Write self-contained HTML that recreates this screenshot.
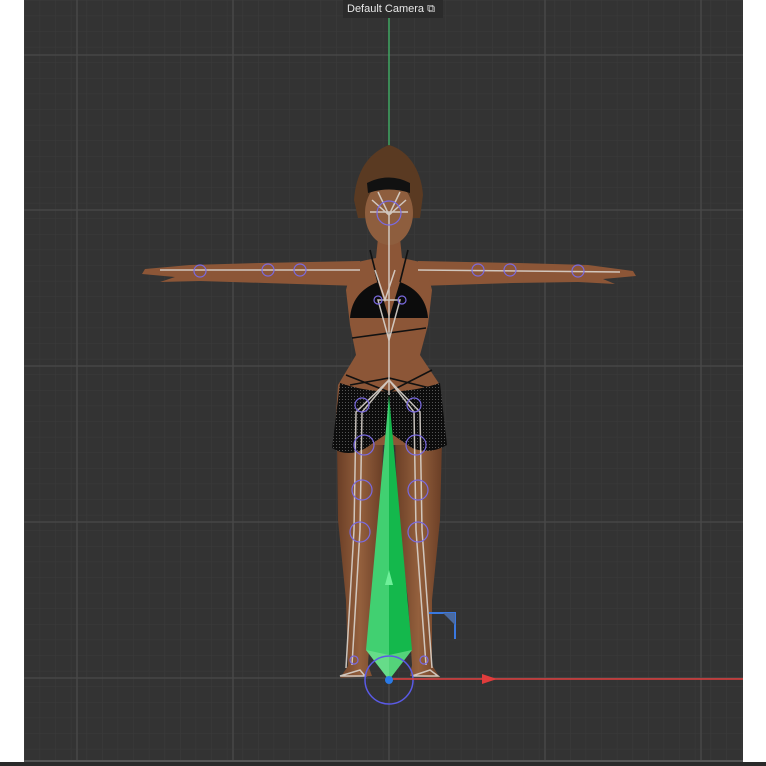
<!DOCTYPE html>
<html><head><meta charset="utf-8"><style>
html,body{margin:0;padding:0;background:#fff;width:766px;height:766px;overflow:hidden}
svg{position:absolute;left:0;top:0}
.lbl{position:absolute;left:343px;top:0;height:18px;width:100px;background:#2b2b2b;color:#e8e8e8;font:11px "Liberation Sans",sans-serif;line-height:19px;padding-left:4px;box-sizing:border-box}
</style></head><body>
<svg width="766" height="766" viewBox="0 0 766 766">
<defs>
<pattern id="minor" x="24" y="0" width="15.6" height="15.6" patternUnits="userSpaceOnUse">
<path d="M0 0V15.6M0 0H15.6" stroke="#3b3b3b" stroke-width="1" fill="none"/>
</pattern>
<linearGradient id="skinL" x1="0" x2="1"><stop offset="0" stop-color="#6a3e26"/><stop offset=".5" stop-color="#94603d"/><stop offset="1" stop-color="#6a3e26"/></linearGradient>
<pattern id="mesh" width="3" height="3" patternUnits="userSpaceOnUse"><rect width="3" height="3" fill="#0d0d0d"/><rect width="1" height="1" fill="#555"/></pattern>
</defs>
<rect x="24" y="0" width="719" height="760" fill="#333333"/>
<rect x="24" y="0" width="719" height="760" fill="url(#minor)"/>
<g stroke="#4a4a4a" stroke-width="1.3">
<line x1="77" y1="0" x2="77" y2="760"/><line x1="233" y1="0" x2="233" y2="760"/>
<line x1="545" y1="0" x2="545" y2="760"/><line x1="701" y1="0" x2="701" y2="760"/>
<line x1="389" y1="0" x2="389" y2="760"/>
<line x1="24" y1="55" x2="743" y2="55"/><line x1="24" y1="210" x2="743" y2="210"/>
<line x1="24" y1="366" x2="743" y2="366"/><line x1="24" y1="522" x2="743" y2="522"/>
<line x1="24" y1="678" x2="743" y2="678"/>
</g>
<rect x="24" y="760" width="719" height="2" fill="#555"/>
<rect x="0" y="762" width="766" height="4" fill="#2a2a2a"/>
<line x1="389" y1="0" x2="389" y2="150" stroke="#3fbf6a" stroke-width="1.2"/>
<path d="M389 145 C370 152 356 170 354 200 L358 218 L420 218 L423 195 C421 168 407 150 389 145Z" fill="#5a3a22"/>
<path d="M360 261 L260 263 L190 265 L145 269 L142 274 L175 277 L160 282 L200 281 L265 283 L360 286Z" fill="#8c5637"/>
<path d="M418 261 L518 263 L588 265 L633 271 L636 276 L603 279 L615 284 L578 282 L513 283 L418 286Z" fill="#8c5637"/>
<path d="M337 440 L383 440 L381 520 L372 600 L368 665 L372 676 L340 678 L348 666 L346 600 L338 520Z" fill="url(#skinL)"/>
<path d="M395 440 L442 440 L440 520 L432 600 L432 665 L440 678 L410 676 L412 665 L408 600 L398 520Z" fill="url(#skinL)"/>
<path d="M378 238 L400 238 L402 258 L425 263 L432 290 L428 325 L420 355 L440 385 L444 445 L334 445 L338 385 L356 355 L350 325 L346 290 L353 263 L376 258Z" fill="#8c5637"/>
<ellipse cx="389" cy="213" rx="24" ry="32" fill="#8e5e3e"/>
<path d="M367 183 Q389 172 410 183 L410 193 Q389 186 368 193Z" fill="#111"/>
<path d="M350 318 Q352 292 378 282 L389 318Z" fill="#0c0c0c"/>
<path d="M428 318 Q426 292 400 282 L389 318Z" fill="#0c0c0c"/>
<g stroke="#111" stroke-width="1.6" fill="none">
<path d="M378 282 L370 250"/><path d="M400 282 L408 250"/>
<path d="M352 338 L426 328"/><path d="M346 375 L389 392 L432 370"/><path d="M350 385 L389 378 L430 388"/>
</g>
<path d="M340 383 Q389 400 440 383 L447 445 Q430 455 412 448 L389 432 L366 448 Q348 458 332 448Z" fill="url(#mesh)"/>
<g stroke="#d9d3cc" stroke-width="1.5" fill="none" opacity=".9">
<path d="M389 215 L389 395"/>
<path d="M360 270 L160 270"/><path d="M418 270 L620 272"/>
<path d="M375 270 L385 300 L395 270"/>
<path d="M389 300 L378 300 L389 340 L400 300Z"/>
<path d="M389 380 L362 412 L360 530 L352 665"/><path d="M389 380 L414 412 L416 530 L426 665"/>
<path d="M389 380 L356 412 L354 530 L346 668"/><path d="M389 380 L420 412 L422 530 L432 668"/>
<path d="M340 676 L360 670 L365 676Z"/><path d="M412 676 L430 670 L438 676Z"/>
<path d="M372 200 L389 215 L406 200 M378 192 L389 215 L400 192 M370 212 L408 212"/>
</g>
<g stroke="#7a6ae0" stroke-width="1.2" fill="none">
<circle cx="362" cy="405" r="7"/><circle cx="414" cy="405" r="7"/>
<circle cx="364" cy="445" r="10"/><circle cx="416" cy="445" r="10"/>
<circle cx="362" cy="490" r="10"/><circle cx="418" cy="490" r="10"/>
<circle cx="360" cy="532" r="10"/><circle cx="418" cy="532" r="10"/>
<circle cx="354" cy="660" r="4"/><circle cx="424" cy="660" r="4"/>
<circle cx="378" cy="300" r="4"/><circle cx="402" cy="300" r="4"/>
<circle cx="389" cy="213" r="12"/>
<circle cx="200" cy="271" r="6"/><circle cx="268" cy="270" r="6"/><circle cx="300" cy="270" r="6"/>
<circle cx="578" cy="271" r="6"/><circle cx="510" cy="270" r="6"/><circle cx="478" cy="270" r="6"/>
</g>
<path d="M389 395 L366 650 L389 680Z" fill="#41d071"/>
<path d="M389 395 L412 650 L389 680Z" fill="#14b84c"/>
<path d="M366 650 L389 655 L412 650 L389 680Z" fill="#7ee59a" opacity=".6"/>
<path d="M389 570 L385 585 L393 585Z" fill="#6ff09a"/>
<circle cx="389" cy="680" r="24" fill="none" stroke="#5a5ae6" stroke-width="1.5"/>
<line x1="389" y1="679" x2="743" y2="679" stroke="#e03c3c" stroke-width="1.5"/>
<path d="M482 674 L497 679 L482 684Z" fill="#e03c3c"/>
<circle cx="389" cy="680" r="4" fill="#2a7ae6"/>
<path d="M429 613 L455 613 L455 639" fill="none" stroke="#3a78e0" stroke-width="2"/>
<path d="M443 613 L455 613 L455 625Z" fill="#4a6aa0"/>
</svg>
<div class="lbl">Default Camera ⧉</div>
</body></html>
